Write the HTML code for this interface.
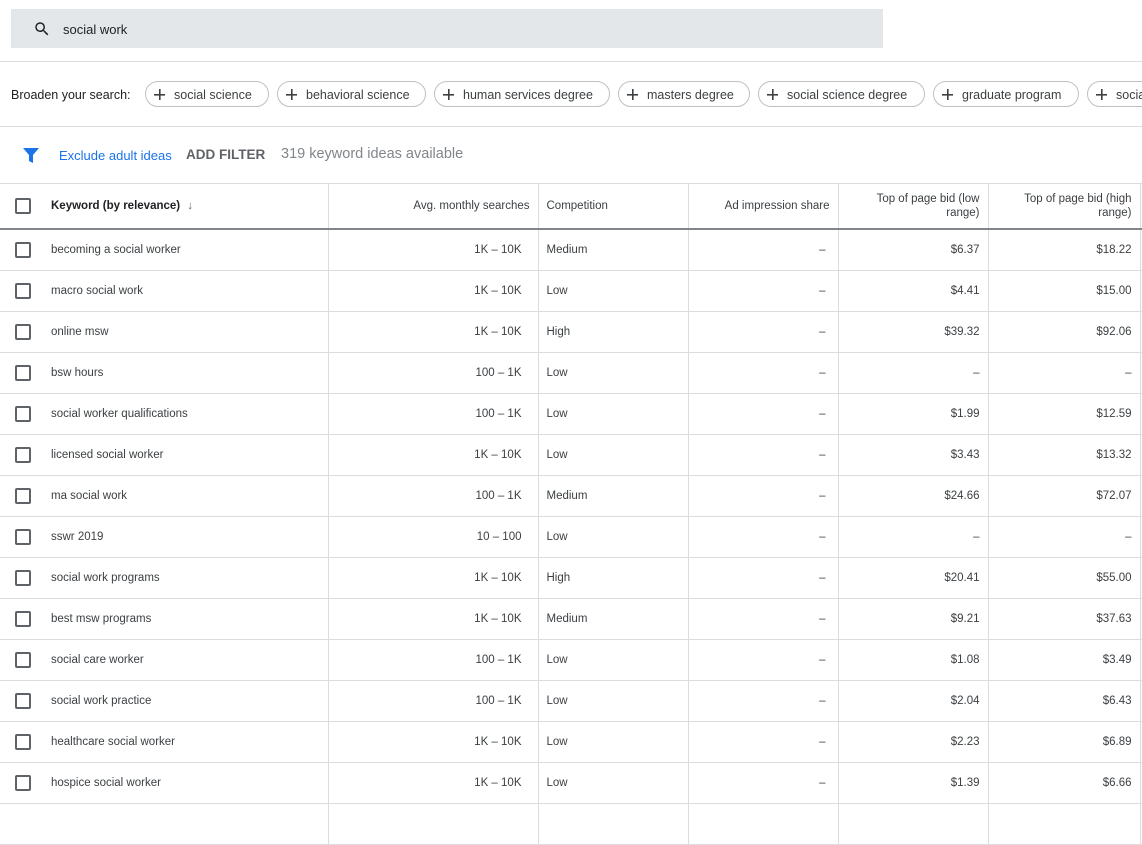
<!DOCTYPE html>
<html><head><meta charset="utf-8"><style>
*{box-sizing:border-box;margin:0;padding:0}
body{width:1142px;height:807px;overflow:hidden;background:#fff;font-family:"Liberation Sans",Roboto,sans-serif;color:#202124;position:relative}
.search{position:absolute;left:11px;top:9px;width:872px;height:39px;background:#e4e7ea}
.search span{position:absolute;left:52px;top:13px;font-size:13px;color:#202124}
.hr{position:absolute;left:0;width:1142px;height:1px;background:#dadce0}
.broad{position:absolute;left:11px;top:88px;font-size:12.5px;color:#202124}
.chip{position:absolute;top:81px;height:26px;border:1px solid #bdc1c6;border-radius:13px;font-size:12.5px;line-height:26px;padding-left:28px;color:#3c4043;white-space:nowrap;overflow:hidden}
.chip:before{content:"";position:absolute;left:8px;top:7px;width:11px;height:11px;background:linear-gradient(#3c4043,#3c4043) center/11px 1.6px no-repeat,linear-gradient(#3c4043,#3c4043) center/1.6px 11px no-repeat}
.filt{position:absolute;top:147px;font-size:13.5px}
table{position:absolute;left:0;top:184px;border-collapse:collapse;table-layout:fixed;width:1142px}
td,th{font-size:11.5px;color:#3c4043;border-right:1px solid #dadce0;border-bottom:1px solid #dadce0;height:41px;padding:0 8px;font-weight:normal;white-space:nowrap}
th{height:45px;border-bottom:2px solid #80868b;line-height:14px}
.r{text-align:right}
td.s{padding-right:16px}
td.a{padding-right:12px}
.cb{padding-left:15px;border-right:none}
.cb i{display:block;width:16px;height:16px;border:2px solid #5f6368;border-radius:2px}
.kw{padding-left:6px}
</style></head><body>
<div class="search"><svg style="position:absolute;left:22px;top:11px" width="18" height="18" viewBox="0 0 24 24"><path d="M15.5 14h-.79l-.28-.27A6.47 6.47 0 0 0 16 9.5 6.5 6.5 0 1 0 9.5 16c1.61 0 3.09-.59 4.23-1.57l.27.28v.79l5 4.99L20.49 19l-4.99-5zm-6 0C7.01 14 5 11.990 5 9.5S7.01 5 9.5 5 14 7.01 14 9.5 11.99 14 9.5 14z" fill="#202124"/></svg><span>social work</span></div>
<div class="hr" style="top:61px"></div>
<div class="broad">Broaden your search:</div>
<div class="chip" style="left:145px;width:124px">social science</div>
<div class="chip" style="left:277px;width:149px">behavioral science</div>
<div class="chip" style="left:434px;width:176px">human services degree</div>
<div class="chip" style="left:618px;width:132px">masters degree</div>
<div class="chip" style="left:758px;width:167px">social science degree</div>
<div class="chip" style="left:933px;width:146px">graduate program</div>
<div class="chip" style="left:1087px;width:80px">social work</div>
<div class="hr" style="top:126px"></div>
<svg style="position:absolute;left:22px;top:146px" width="18" height="18" viewBox="0 0 18 18"><path d="M1 2h16l-6 7v8l-4-2V9z" fill="#1a73e8"/></svg>
<div class="filt" style="left:59px;color:#1a73e8;font-size:13px;top:148px">Exclude adult ideas</div>
<div class="filt" style="left:186px;color:#5f6368;font-weight:bold;font-size:13.5px">ADD FILTER</div>
<div class="filt" style="left:281px;color:#80868b;font-size:14.5px;top:146px">319 keyword ideas available</div>
<div class="hr" style="top:183px"></div>
<table>
<colgroup><col style="width:45px"><col style="width:283px"><col style="width:210px"><col style="width:150px"><col style="width:150px"><col style="width:150px"><col style="width:152px"><col style="width:2px"></colgroup>
<tr><th class="cb"><i></i></th><th class="kw" style="text-align:left;font-weight:bold;color:#202124">Keyword (by relevance) <span style="color:#5f6368;font-weight:normal;margin-left:4px">↓</span></th><th class="r">Avg. monthly searches</th><th style="text-align:left">Competition</th><th class="r">Ad impression share</th><th class="r">Top of page bid (low<br>range)</th><th class="r">Top of page bid (high<br>range)</th><th></th></tr>
<tr><td class="cb"><i></i></td><td class="kw">becoming a social worker</td><td class="r s">1K – 10K</td><td>Medium</td><td class="r a">–</td><td class="r">$6.37</td><td class="r">$18.22</td><td></td></tr>
<tr><td class="cb"><i></i></td><td class="kw">macro social work</td><td class="r s">1K – 10K</td><td>Low</td><td class="r a">–</td><td class="r">$4.41</td><td class="r">$15.00</td><td></td></tr>
<tr><td class="cb"><i></i></td><td class="kw">online msw</td><td class="r s">1K – 10K</td><td>High</td><td class="r a">–</td><td class="r">$39.32</td><td class="r">$92.06</td><td></td></tr>
<tr><td class="cb"><i></i></td><td class="kw">bsw hours</td><td class="r s">100 – 1K</td><td>Low</td><td class="r a">–</td><td class="r">–</td><td class="r">–</td><td></td></tr>
<tr><td class="cb"><i></i></td><td class="kw">social worker qualifications</td><td class="r s">100 – 1K</td><td>Low</td><td class="r a">–</td><td class="r">$1.99</td><td class="r">$12.59</td><td></td></tr>
<tr><td class="cb"><i></i></td><td class="kw">licensed social worker</td><td class="r s">1K – 10K</td><td>Low</td><td class="r a">–</td><td class="r">$3.43</td><td class="r">$13.32</td><td></td></tr>
<tr><td class="cb"><i></i></td><td class="kw">ma social work</td><td class="r s">100 – 1K</td><td>Medium</td><td class="r a">–</td><td class="r">$24.66</td><td class="r">$72.07</td><td></td></tr>
<tr><td class="cb"><i></i></td><td class="kw">sswr 2019</td><td class="r s">10 – 100</td><td>Low</td><td class="r a">–</td><td class="r">–</td><td class="r">–</td><td></td></tr>
<tr><td class="cb"><i></i></td><td class="kw">social work programs</td><td class="r s">1K – 10K</td><td>High</td><td class="r a">–</td><td class="r">$20.41</td><td class="r">$55.00</td><td></td></tr>
<tr><td class="cb"><i></i></td><td class="kw">best msw programs</td><td class="r s">1K – 10K</td><td>Medium</td><td class="r a">–</td><td class="r">$9.21</td><td class="r">$37.63</td><td></td></tr>
<tr><td class="cb"><i></i></td><td class="kw">social care worker</td><td class="r s">100 – 1K</td><td>Low</td><td class="r a">–</td><td class="r">$1.08</td><td class="r">$3.49</td><td></td></tr>
<tr><td class="cb"><i></i></td><td class="kw">social work practice</td><td class="r s">100 – 1K</td><td>Low</td><td class="r a">–</td><td class="r">$2.04</td><td class="r">$6.43</td><td></td></tr>
<tr><td class="cb"><i></i></td><td class="kw">healthcare social worker</td><td class="r s">1K – 10K</td><td>Low</td><td class="r a">–</td><td class="r">$2.23</td><td class="r">$6.89</td><td></td></tr>
<tr><td class="cb"><i></i></td><td class="kw">hospice social worker</td><td class="r s">1K – 10K</td><td>Low</td><td class="r a">–</td><td class="r">$1.39</td><td class="r">$6.66</td><td></td></tr>
<tr><td class="cb"></td><td class="kw"></td><td></td><td></td><td></td><td></td><td></td><td></td></tr>
</table>
</body></html>
